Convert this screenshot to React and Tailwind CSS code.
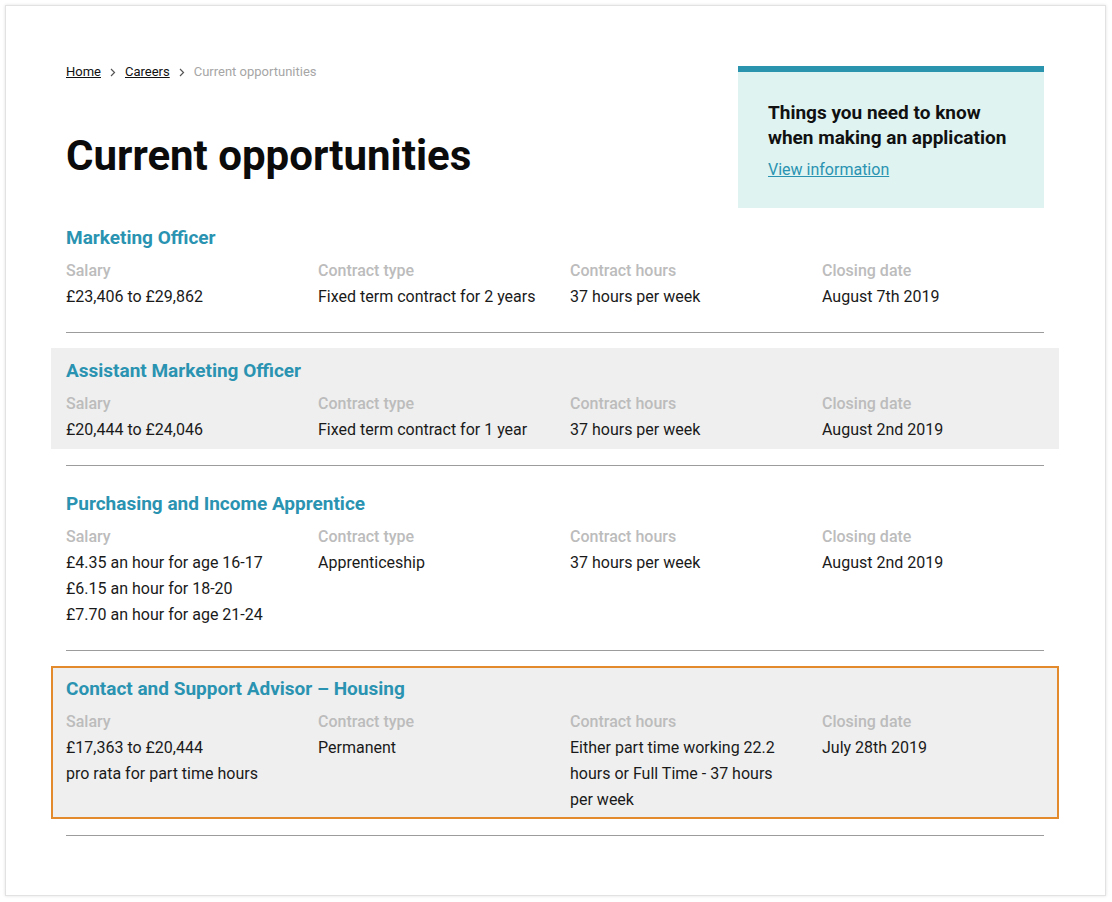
import React from "react";

const jobs = [
  {
    title: "Marketing Officer",
    salary: ["£23,406 to £29,862"],
    contract: "Fixed term contract for 2 years",
    hours: ["37 hours per week"],
    closing: "August 7th 2019",
    shade: false,
  },
  {
    title: "Assistant Marketing Officer",
    salary: ["£20,444 to £24,046"],
    contract: "Fixed term contract for 1 year",
    hours: ["37 hours per week"],
    closing: "August 2nd 2019",
    shade: true,
  },
  {
    title: "Purchasing and Income Apprentice",
    salary: [
      "£4.35 an hour for age 16-17",
      "£6.15 an hour for 18-20",
      "£7.70 an hour for age 21-24",
    ],
    contract: "Apprenticeship",
    hours: ["37 hours per week"],
    closing: "August 2nd 2019",
    shade: false,
  },
  {
    title: "Contact and Support Advisor – Housing",
    salary: ["£17,363 to £20,444", "pro rata for part time hours"],
    contract: "Permanent",
    hours: ["Either part time working 22.2 hours or Full Time - 37 hours per week"],
    closing: "July 28th 2019",
    shade: true,
    focused: true,
  },
];

const Chevron = () => (
  <svg width="6" height="9" viewBox="0 0 6 9" className="mx-[9px]">
    <path d="M1 1l3.5 3.5L1 8" fill="none" stroke="#555" strokeWidth="1.2" />
  </svg>
);

const Field = ({ label, lines }) => (
  <div>
    <div className="text-[16px] leading-[26px] font-medium text-[#bcbcbc]">{label}</div>
    {lines.map((line, i) => (
      <div key={i} className="text-[16px] leading-[26px] text-[#1a1a1a]">
        {line}
      </div>
    ))}
  </div>
);

const JobRow = ({ job }) => (
  <div>
    <div
      className={
        "-mx-[15px] px-[15px] pt-[11px] pb-[6px] " +
        (job.shade ? "bg-[#efefef] " : "") +
        (job.focused ? "ring-2 ring-inset ring-[#e38b2c]" : "")
      }
    >
      <h2 className="text-[19px] leading-[24px] font-bold text-[#2a93b1]">{job.title}</h2>
      <div className="grid grid-cols-4 gap-x-[30px] mt-2">
        <Field label="Salary" lines={job.salary} />
        <Field label="Contract type" lines={[job.contract]} />
        <Field label="Contract hours" lines={job.hours} />
        <Field label="Closing date" lines={[job.closing]} />
      </div>
    </div>
    <div className="mt-4 mb-[15px] h-px bg-[#9c9c9c]" />
  </div>
);

export default function App() {
  return (
    <div className="min-h-screen bg-white p-[5px]" style={{ fontFamily: "Roboto, 'Liberation Sans', sans-serif" }}>
      <div className="h-[891px] w-[1101px] border border-[#e2e2e2] shadow-[0_0_3px_rgba(0,0,0,0.12)] bg-white pl-[60px] pr-[61px] pt-[60px]">
        <div className="flex justify-between">
          <div>
            <nav className="flex items-center text-[13px] leading-[12px]">
              <a className="underline text-[#111]">Home</a>
              <Chevron />
              <a className="underline text-[#111]">Careers</a>
              <Chevron />
              <span className="text-[#a6a6a6]">Current opportunities</span>
            </nav>
            <h1 className="mt-[53px] text-[42px] leading-[50px] font-bold text-[#0b0b0b]">
              Current opportunities
            </h1>
          </div>
          <div className="w-[306px] h-[142px] border-t-[6px] border-[#2a93ad] bg-[#dff4f1] px-[30px] pt-[28px]">
            <p className="text-[19px] leading-[25px] font-bold text-[#111]">
              Things you need to know when making an application
            </p>
            <a className="mt-[10px] inline-block text-[16px] leading-[20px] text-[#2a93b1] underline">
              View information
            </a>
          </div>
        </div>
        <div className="mt-[7px]">
          {jobs.map((job) => (
            <JobRow key={job.title} job={job} />
          ))}
        </div>
      </div>
    </div>
  );
}
